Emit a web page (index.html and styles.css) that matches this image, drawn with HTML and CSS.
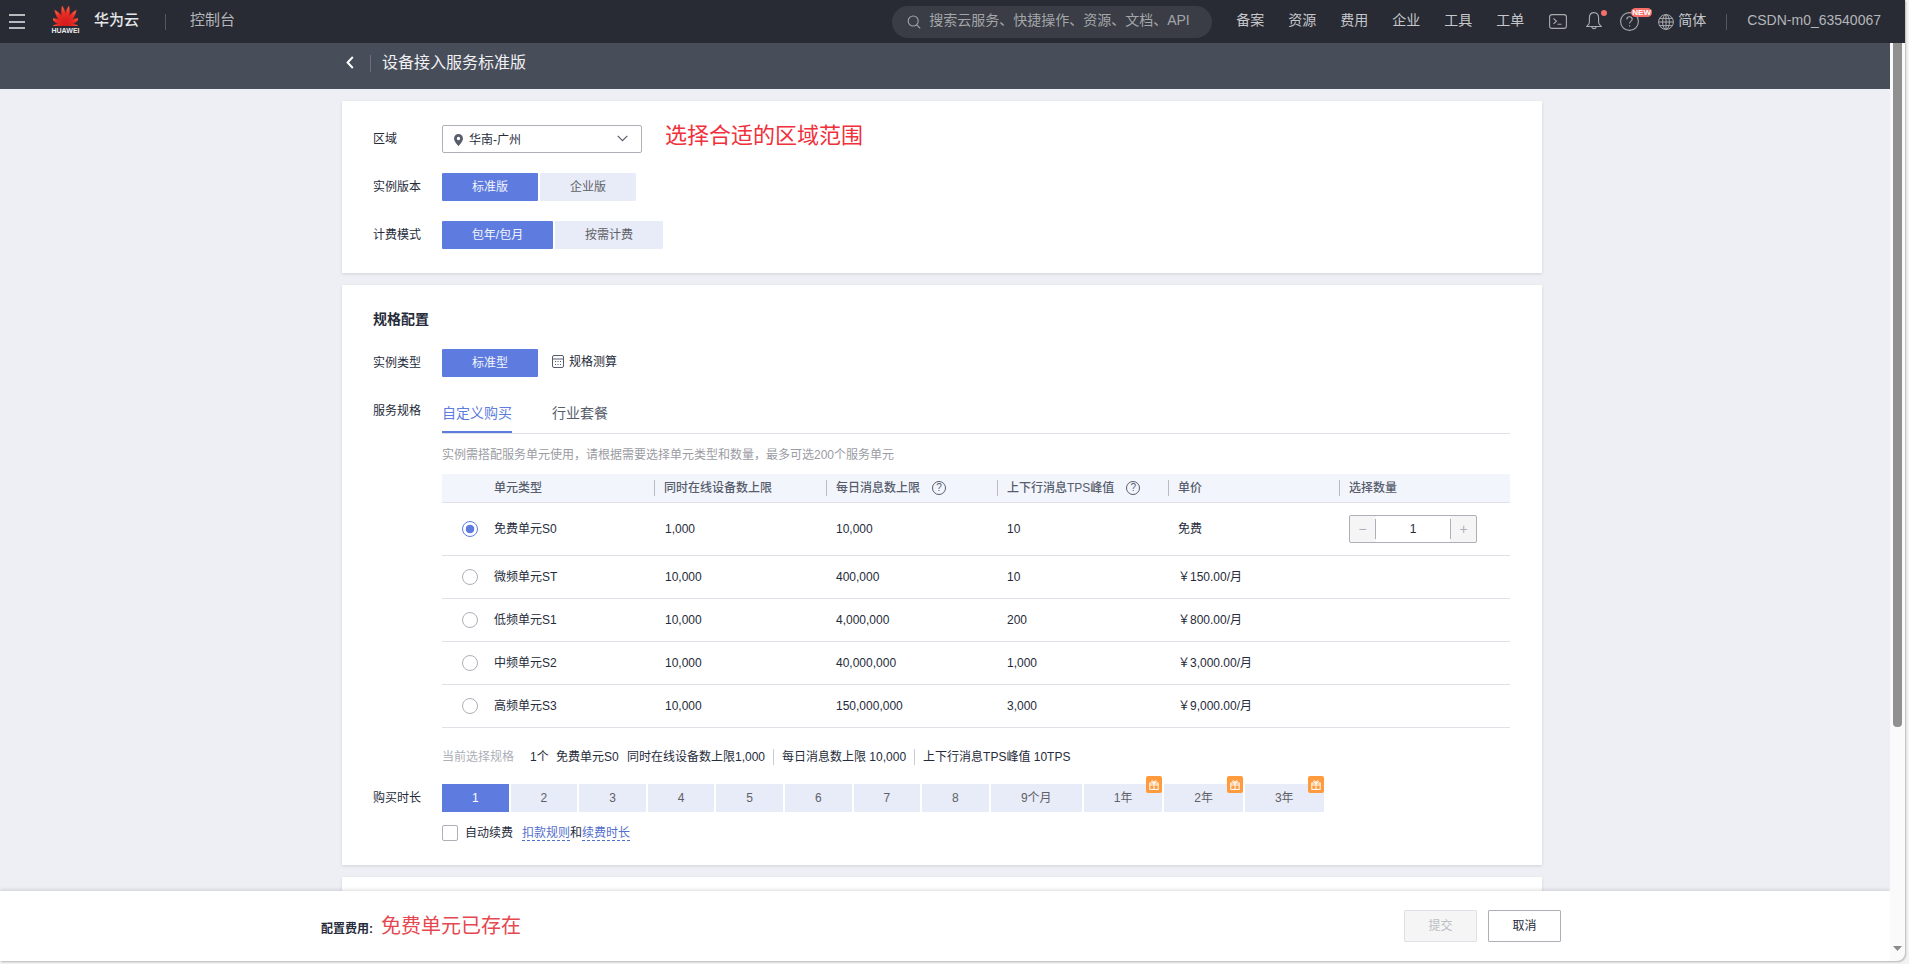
FILE: index.html
```html
<!DOCTYPE html>
<html lang="zh-CN">
<head>
<meta charset="utf-8">
<title>设备接入服务标准版</title>
<link rel="stylesheet" href="styles.css">
</head>
<body>
<div class="window">
  <header class="topbar">
    <div class="menu-icon"><span></span><span></span><span></span></div>
    <div class="logo">
      <svg class="petals" width="25" height="21" viewBox="0 0 25 21">
        <defs>
          <linearGradient id="petal" x1="0" y1="1" x2="0" y2="0">
            <stop offset="0" stop-color="#c9141c"/>
            <stop offset="0.65" stop-color="#ec2f24"/>
            <stop offset="1" stop-color="#f57a5c"/>
          </linearGradient>
        </defs>
        <g fill="url(#petal)" stroke="#e02a22" stroke-width=".35">
          <path transform="translate(12.5 20.5) rotate(-8)" d="M0 0C-3-6-3.4-13-.6-20C2.6-14 2.6-6 0 0Z"/>
          <path transform="translate(12.5 20.5) rotate(8)" d="M0 0C-2.6-6-2.6-14 .6-20C3.4-13 3-6 0 0Z"/>
          <path transform="translate(12.5 20.5) rotate(-32)" d="M0 0C-3.2-6-3.6-12-1-19C2.6-13 2.6-6 0 0Z"/>
          <path transform="translate(12.5 20.5) rotate(32)" d="M0 0C-2.6-6-2.6-13 1-19C3.6-12 3.2-6 0 0Z"/>
          <path transform="translate(12.5 20.5) rotate(-58)" d="M0 0C-3-5-3.6-10-1.4-16C2.2-11 2.2-5 0 0Z"/>
          <path transform="translate(12.5 20.5) rotate(58)" d="M0 0C-2.2-5-2.2-11 1.4-16C3.6-10 3-5 0 0Z"/>
          <path transform="translate(12 20.5) rotate(-86)" d="M0 0C-2.6-4-3-8-1.4-12.5C1.8-9 1.8-4 0 0Z"/>
          <path transform="translate(13 20.5) rotate(86)" d="M0 0C-1.8-4-1.8-9 1.4-12.5C3-8 2.6-4 0 0Z"/>
        </g>
      </svg>
      <span class="logo-word">HUAWEI</span>
    </div>
    <span class="brand">华为云</span>
    <span class="top-divider"></span>
    <span class="console">控制台</span>
    <div class="top-right">
      <div class="search">
        <svg class="search-icon" width="14" height="14" viewBox="0 0 14 14" fill="none" stroke="#a3a5a9" stroke-width="1.1"><circle cx="6.2" cy="6" r="5"/><path d="M9.8 9.8L13.2 13.4"/></svg>
        <span class="top-text">搜索云服务、快捷操作、资源、文档、API</span>
      </div>
      <nav class="nav">
        <span class="top-text">备案</span><span class="top-text">资源</span><span class="top-text">费用</span><span class="top-text">企业</span><span class="top-text">工具</span><span class="top-text">工单</span>
      </nav>
      <svg class="ico-term" width="18" height="15" viewBox="0 0 18 15" fill="none" stroke="#a9abb0" stroke-width="1.1"><rect x=".6" y=".6" width="16.8" height="13.8" rx="2.5"/><path d="M4.5 4.5L7.5 7.2L4.5 9.8M8.5 10.3H12.5"/></svg>
      <div class="bell">
        <svg width="16" height="19" viewBox="0 0 16 19" fill="none" stroke="#a9abb0" stroke-width="1.1"><path d="M8 .6C4.8.6 3.4 3 3.4 6V10.5C3.4 12 2 13.2.7 14.5H15.3C14 13.2 12.6 12 12.6 10.5V6C12.6 3 11.2.6 8 .6Z"/><path d="M5.8 15A2.3 2.3 0 0 0 10.2 15"/></svg>
        <i class="dot"></i>
      </div>
      <div class="help">
        <svg width="19" height="19" viewBox="0 0 19 19" fill="none" stroke="#a9abb0" stroke-width="1.1"><circle cx="9.5" cy="9.5" r="8.9"/><path d="M6.8 7.4C6.8 5.8 8 4.8 9.5 4.8C11.1 4.8 12.2 5.8 12.2 7.2C12.2 9 9.6 9.3 9.6 11.6"/><path d="M9.6 13.2V14.6"/></svg>
        <b class="new">NEW</b>
      </div>
      <svg class="ico-globe" width="16" height="16" viewBox="0 0 16 16" fill="none" stroke="#a9abb0" stroke-width="1"><circle cx="8" cy="8" r="7.4"/><ellipse cx="8" cy="8" rx="3.4" ry="7.4"/><path d="M8 .6V15.4M.6 8H15.4M1.6 4.4H14.4M1.6 11.6H14.4"/></svg>
      <span class="lang top-text">简体</span>
      <span class="top-divider user-divider"></span>
      <span class="user top-text">CSDN-m0_63540067</span>
    </div>
  </header>

  <div class="under">
    <div class="main">
      <div class="subheader">
        <svg class="back" width="8" height="13" viewBox="0 0 8 13" fill="none" stroke="#fff" stroke-width="2"><path d="M6.8 1L1.6 6.5L6.8 12"/></svg>
        <span class="sub-divider"></span>
        <h1 class="sub-title">设备接入服务标准版</h1>
      </div>

      <div class="content">
        <section class="card">
          <div class="form-row">
            <label class="form-label">区域</label>
            <div class="select">
              <svg width="9" height="12" viewBox="0 0 9 12"><path fill="#575d6c" fill-rule="evenodd" d="M4.5 0C2 0 0 2 0 4.4C0 7.4 4.5 12 4.5 12S9 7.4 9 4.4C9 2 7 0 4.5 0ZM4.5 2.8A1.7 1.7 0 1 1 4.5 6.2A1.7 1.7 0 1 1 4.5 2.8Z"/></svg>
              <span class="select-text">华南-广州</span>
              <svg class="select-arrow" width="11" height="7" viewBox="0 0 11 7" fill="none" stroke="#575d6c" stroke-width="1.2"><path d="M.7.8L5.5 5.6L10.3.8"/></svg>
            </div>
            <span class="note-red">选择合适的区域范围</span>
          </div>
          <div class="form-row gap20">
            <label class="form-label">实例版本</label>
            <div class="segs">
              <span class="seg seg-on w96">标准版</span>
              <span class="seg w96">企业版</span>
            </div>
          </div>
          <div class="form-row gap20">
            <label class="form-label">计费模式</label>
            <div class="segs">
              <span class="seg seg-on w111">包年/包月</span>
              <span class="seg w108">按需计费</span>
            </div>
          </div>
        </section>

        <section class="card card-gap">
          <h2 class="card-title">规格配置</h2>
          <div class="form-row gap20">
            <label class="form-label">实例类型</label>
            <span class="seg seg-on w96">标准型</span>
            <svg class="calc" width="12" height="13" viewBox="0 0 12 13" fill="none" stroke="#575d6c" stroke-width="1"><rect x=".5" y=".5" width="11" height="12" rx="1.5"/><path d="M.5 4H11.5M3 6.5H4M5.5 6.5H6.5M8 6.5H9M3 9.5H4M5.5 9.5H6.5M8 9.5H9"/></svg>
            <span class="calc-text">规格测算</span>
          </div>
          <div class="form-row gap20 row-top">
            <label class="form-label label-tall">服务规格</label>
            <div class="spec">
              <div class="tabs">
                <span class="tab tab-on">自定义购买</span>
                <span class="tab">行业套餐</span>
              </div>
              <p class="hint">实例需搭配服务单元使用，请根据需要选择单元类型和数量，最多可选200个服务单元</p>
              <div class="table">
                <div class="thead">
                  <span></span>
                  <span class="th th-plain">单元类型</span>
                  <span class="th">同时在线设备数上限</span>
                  <span class="th">每日消息数上限<i class="q">?</i></span>
                  <span class="th">上下行消息TPS峰值<i class="q">?</i></span>
                  <span class="th">单价</span>
                  <span class="th">选择数量</span>
                </div>
                <div class="tr tr-first">
                  <i class="radio radio-on"></i><span class="td">免费单元S0</span><span class="td">1,000</span><span class="td">10,000</span><span class="td">10</span><span class="td">免费</span>
                  <div class="stepper"><span class="step-btn">−</span><i class="step-line"></i><span class="step-val">1</span><i class="step-line"></i><span class="step-btn">+</span></div>
                </div>
                <div class="tr">
                  <i class="radio"></i><span class="td">微频单元ST</span><span class="td">10,000</span><span class="td">400,000</span><span class="td">10</span><span class="td">￥150.00/月</span><span></span>
                </div>
                <div class="tr">
                  <i class="radio"></i><span class="td">低频单元S1</span><span class="td">10,000</span><span class="td">4,000,000</span><span class="td">200</span><span class="td">￥800.00/月</span><span></span>
                </div>
                <div class="tr">
                  <i class="radio"></i><span class="td">中频单元S2</span><span class="td">10,000</span><span class="td">40,000,000</span><span class="td">1,000</span><span class="td">￥3,000.00/月</span><span></span>
                </div>
                <div class="tr">
                  <i class="radio"></i><span class="td">高频单元S3</span><span class="td">10,000</span><span class="td">150,000,000</span><span class="td">3,000</span><span class="td">￥9,000.00/月</span><span></span>
                </div>
              </div>
              <div class="summary">
                <span class="sum-label">当前选择规格</span>
                <span class="sum-count">1个</span>
                <span class="sum-type">免费单元S0</span>
                <span class="sum-item">同时在线设备数上限1,000</span>
                <span class="sum-item sum-sep">每日消息数上限 10,000</span>
                <span class="sum-item sum-sep">上下行消息TPS峰值 10TPS</span>
              </div>
            </div>
          </div>
          <div class="form-row dur-row">
            <label class="form-label">购买时长</label>
            <div class="durs">
              <span class="dur dur-on">1</span><span class="dur">2</span><span class="dur">3</span><span class="dur">4</span><span class="dur">5</span><span class="dur">6</span><span class="dur">7</span><span class="dur">8</span>
              <span class="dur dur-9">9个月</span>
              <span class="dur dur-y">1年<i class="gift"><svg width="10" height="10" viewBox="0 0 10 10" fill="none" stroke="#fff" stroke-width="1"><rect x=".8" y="3" width="8.4" height="6.4"/><path d="M5 3V9.4M.8 5H9.2M5 3C3.5 3 2.6 2 2.8.8C4 .6 5 1.6 5 3C5 1.6 6 .6 7.2.8C7.4 2 6.5 3 5 3Z"/></svg></i></span>
              <span class="dur dur-y">2年<i class="gift"><svg width="10" height="10" viewBox="0 0 10 10" fill="none" stroke="#fff" stroke-width="1"><rect x=".8" y="3" width="8.4" height="6.4"/><path d="M5 3V9.4M.8 5H9.2M5 3C3.5 3 2.6 2 2.8.8C4 .6 5 1.6 5 3C5 1.6 6 .6 7.2.8C7.4 2 6.5 3 5 3Z"/></svg></i></span>
              <span class="dur dur-y">3年<i class="gift"><svg width="10" height="10" viewBox="0 0 10 10" fill="none" stroke="#fff" stroke-width="1"><rect x=".8" y="3" width="8.4" height="6.4"/><path d="M5 3V9.4M.8 5H9.2M5 3C3.5 3 2.6 2 2.8.8C4 .6 5 1.6 5 3C5 1.6 6 .6 7.2.8C7.4 2 6.5 3 5 3Z"/></svg></i></span>
            </div>
          </div>
          <div class="renew">
            <i class="checkbox"></i>
            <span class="renew-text">自动续费</span>
            <span class="renew-links"><a class="dash-link">扣款规则</a>和<a class="dash-link">续费时长</a></span>
          </div>
        </section>

        <section class="card card-gap card-next"></section>
      </div>

      <footer class="footer">
        <span class="fee-label">配置费用:</span>
        <span class="fee-note">免费单元已存在</span>
        <span class="btn btn-off">提交</span>
        <span class="btn">取消</span>
      </footer>
    </div>
    <div class="scrollbar">
      <div class="thumb"></div>
      <svg class="scroll-arrow" width="9" height="5" viewBox="0 0 9 5"><path fill="#8a8a8a" d="M0 0H9L4.5 5Z"/></svg>
    </div>
  </div>
</div>
</body>
</html>
```

FILE: styles.css
```css
* { box-sizing: border-box; }
html, body {
  margin: 0;
  height: 100%;
  overflow: hidden;
  background: #f3f3f4;
  font-family: "Liberation Sans", "Noto Sans CJK SC", sans-serif;
  font-size: 12px;
  line-height: 1.3;
  color: #252b3a;
}
i { font-style: normal; }
h1, h2, p { margin: 0; font-weight: normal; }

.window {
  width: 1905px;
  height: 961px;
  display: flex;
  flex-direction: column;
  overflow: hidden;
  border-bottom-right-radius: 8px;
  box-shadow: 1px 1px 2px rgba(0, 0, 0, .25);
  background: #fafafa;
}

/* top bar */
.topbar {
  height: 43px;
  flex: none;
  display: flex;
  align-items: center;
  padding-left: 9px;
  background: #282b33;
  color: #c5c7cb;
  font-size: 14px;
}
.menu-icon {
  width: 16px;
  height: 15px;
  display: flex;
  flex-direction: column;
  justify-content: space-between;
}
.menu-icon span { height: 2px; background: #b8babd; }
.logo {
  width: 25px;
  margin: 0 0 4px 28px;
  display: flex;
  flex-direction: column;
  align-items: center;
}
.petals { display: block; }
.logo-word {
  font-size: 7px;
  line-height: 7px;
  font-weight: bold;
  color: #e8e8ea;
  margin-top: 1px;
}
.brand {
  margin: 0 0 4px 16px;
  font-size: 15px;
  font-weight: 500;
  color: #e4e5e7;
}
.top-divider {
  width: 1px;
  height: 16px;
  background: #54575e;
  margin-left: 26px;
}
.console { margin: 0 0 4px 24px; font-size: 15px; color: #b4b6ba; }
.top-text { margin-bottom: 2px; }
.top-right {
  margin-left: auto;
  padding-right: 24px;
  display: flex;
  align-items: center;
}
.search {
  width: 320px;
  height: 32px;
  border-radius: 16px;
  background: #3a3d45;
  display: flex;
  align-items: center;
  padding-left: 15px;
  color: #a3a5a9;
}
.search-icon { margin-right: 8px; flex: none; }
.nav { display: flex; gap: 24px; margin-left: 24px; }
.ico-term { margin-left: 25px; }
.bell { margin-left: 19px; position: relative; height: 19px; }
.bell svg, .help svg { display: block; }
.dot {
  position: absolute;
  left: 15px;
  top: -2px;
  width: 6px;
  height: 6px;
  border-radius: 50%;
  background: #f66f6a;
}
.help { margin-left: 18px; position: relative; height: 19px; }
.new {
  position: absolute;
  left: 11px;
  top: -4px;
  width: 21px;
  height: 9px;
  border-radius: 5px;
  background: #f66f6a;
  color: #fff;
  font-size: 8px;
  line-height: 9px;
  text-align: center;
}
.ico-globe { margin-left: 19px; }
.lang { margin-left: 4px; }
.user-divider { margin-left: 20px; }
.user { margin-left: 20px; color: #b4b6ba; }

/* body of the window */
.under { flex: 1; display: flex; min-height: 0; }
.main {
  width: 1890px;
  flex: none;
  position: relative;
  overflow: hidden;
  background: #eeeff5;
}
.subheader {
  height: 46px;
  display: flex;
  align-items: center;
  padding-left: 346px;
  background: #484d5a;
}
.back { display: block; margin-bottom: 7px; }
.sub-divider { width: 1px; height: 17px; background: #6a6e79; margin: 0 0 5px 16px; }
.sub-title { margin: 0 0 5px 11px; font-size: 16px; color: #f1f1f3; }

.content { padding: 12px 348px 0 342px; }
.card {
  background: #fff;
  padding: 24px 32px 24px 31px;
  box-shadow: 0 1px 3px rgba(0, 0, 0, .12);
}
.card-gap { margin-top: 12px; }
.card-next { height: 200px; }

.form-row { display: flex; align-items: center; }
.gap20 { margin-top: 20px; }
.row-top { align-items: flex-start; }
.form-label { width: 69px; flex: none; padding-top: 2px; color: #252b3a; }
.label-tall { line-height: 28px; padding-top: 0; }

.select {
  width: 200px;
  height: 28px;
  border: 1px solid #adb0b8;
  border-radius: 2px;
  display: flex;
  align-items: center;
  padding: 1px 13px 0 11px;
}
.select-text { margin-left: 6px; padding-top: 2px; }
.select-arrow { margin-left: auto; margin-top: -2px; }
.note-red {
  margin-left: 23px;
  font-size: 22px;
  line-height: 28px;
  margin-top: -7px;
  color: #f0303a;
}

.segs { display: flex; gap: 2px; }
.seg {
  height: 28px;
  padding-top: 2px;
  display: flex;
  align-items: center;
  justify-content: center;
  background: #e8ecf8;
  color: #5e6066;
  border-radius: 1px;
}
.seg-on { background: #5e7ce0; color: #f3f5fc; }
.w96 { width: 96px; }
.w111 { width: 111px; }
.w108 { width: 108px; }

.card-title {
  font-size: 14px;
  line-height: 20px;
  font-weight: 600;
}
.calc { margin-left: 14px; margin-top: -3px; flex: none; }
.calc-text { margin-left: 5px; }

.spec { width: 1068px; }
.tabs {
  height: 37px;
  display: flex;
  gap: 40px;
  border-bottom: 1px solid #dfe1e6;
}
.tab {
  height: 36px;
  line-height: 32px;
  font-size: 14px;
  color: #575d6c;
}
.tab-on { color: #5e7ce0; border-bottom: 2px solid #5e7ce0; }
.hint { margin-top: 13px; line-height: 16px; color: #9a9ca3; }

.table { margin-top: 11px; }
.thead, .tr {
  display: grid;
  grid-template-columns: 42px 170px 172px 171px 171px 171px 171px;
  align-items: center;
}
.thead {
  height: 29px;
  background: #f2f5fc;
  border-bottom: 1px solid #dfe1e6;
}
.th {
  height: 16px;
  line-height: 16px;
  border-left: 1px solid #b8bbc2;
  padding-left: 9px;
  font-weight: 500;
  color: #575d6c;
  white-space: nowrap;
  display: flex;
  align-items: center;
}
.th-plain { border-left: 0; padding-left: 10px; }
.q {
  width: 14px;
  height: 14px;
  margin-left: 12px;
  border: 1px solid #575d6c;
  border-radius: 50%;
  font-size: 10px;
  line-height: 12px;
  text-align: center;
  font-weight: normal;
  flex: none;
}
.tr {
  height: 43px;
  border-bottom: 1px solid #dfe1e6;
}
.tr-first { height: 53px; }
.td { padding: 2px 0 0 10px; white-space: nowrap; }
.td:nth-child(3) { padding-left: 11px; }
.radio {
  width: 16px;
  height: 16px;
  margin-left: 20px;
  border: 1px solid #adb0b8;
  border-radius: 50%;
  display: block;
  background: #fff;
}
.radio-on {
  border-color: #5e7ce0;
  background: radial-gradient(circle, #5e7ce0 0, #5e7ce0 4px, #fff 4.6px);
}
.stepper {
  width: 128px;
  height: 28px;
  margin-left: 10px;
  border: 1px solid #adb0b8;
  border-radius: 2px;
  display: flex;
  align-items: center;
  background: #f5f5f6;
}
.step-btn {
  width: 25px;
  text-align: center;
  font-size: 14px;
  color: #adb0b8;
  flex: none;
}
.step-line { width: 1px; height: 20px; background: #adb0b8; flex: none; }
.step-val {
  flex: 1;
  height: 26px;
  line-height: 26px;
  text-align: center;
  background: #fff;
}

.summary {
  margin-top: 21px;
  height: 16px;
  line-height: 16px;
  display: flex;
  align-items: center;
  white-space: nowrap;
}
.sum-label { color: #adb0b8; width: 88px; flex: none; }
.sum-count { width: 26px; flex: none; }
.sum-type { width: 71px; flex: none; }
.sum-item { padding-right: 8px; }
.sum-sep {
  border-left: 1px solid #c9ccd2;
  padding-left: 8px;
}

.dur-row { margin-top: 19px; }
.durs { display: flex; gap: 2px; }
.dur {
  width: 66.6px;
  height: 28px;
  padding-top: 2px;
  display: flex;
  align-items: center;
  justify-content: center;
  background: #e8ecf8;
  color: #5e6066;
  position: relative;
}
.dur-on { background: #5e7ce0; color: #fff; }
.dur-9 { width: 91px; }
.dur-y { width: 78.6px; }
.gift {
  position: absolute;
  right: 0;
  top: -8px;
  width: 16px;
  height: 17px;
  border-radius: 2px;
  background: #ff9a3d;
  display: flex;
  align-items: center;
  justify-content: center;
}
.renew {
  margin: 13px 0 0 69px;
  height: 16px;
  display: flex;
  align-items: center;
}
.checkbox {
  width: 16px;
  height: 16px;
  border: 1px solid #adb0b8;
  border-radius: 2px;
  flex: none;
}
.renew-text { margin-left: 7px; padding-top: 2px; }
.renew-links { margin-left: 9px; padding-top: 2px; }
.dash-link { color: #526ecc; border-bottom: 1px dashed #526ecc; }

.footer {
  position: absolute;
  left: 0;
  right: 0;
  bottom: 0;
  height: 70px;
  background: #fff;
  box-shadow: 0 -1px 4px rgba(0, 0, 0, .14);
  display: flex;
  align-items: center;
  padding: 0 329px 0 321px;
}
.fee-label { font-weight: 600; margin-top: 7px; }
.fee-note { margin-left: 8px; font-size: 20px; color: #e5484f; }
.btn {
  width: 73px;
  height: 32px;
  padding-top: 2px;
  display: flex;
  align-items: center;
  justify-content: center;
  border: 1px solid #adb0b8;
  border-radius: 1px;
}
.btn-off {
  margin-left: auto;
  margin-right: 11px;
  background: #f5f5f6;
  border-color: #dfe1e6;
  color: #bcbec4;
}

.scrollbar {
  flex: 1;
  padding: 0 3px 10px;
  display: flex;
  flex-direction: column;
  justify-content: space-between;
}
.thumb {
  height: 684px;
  background: #909090;
  border-radius: 0 0 4px 4px;
}
.scroll-arrow { display: block; }
```
